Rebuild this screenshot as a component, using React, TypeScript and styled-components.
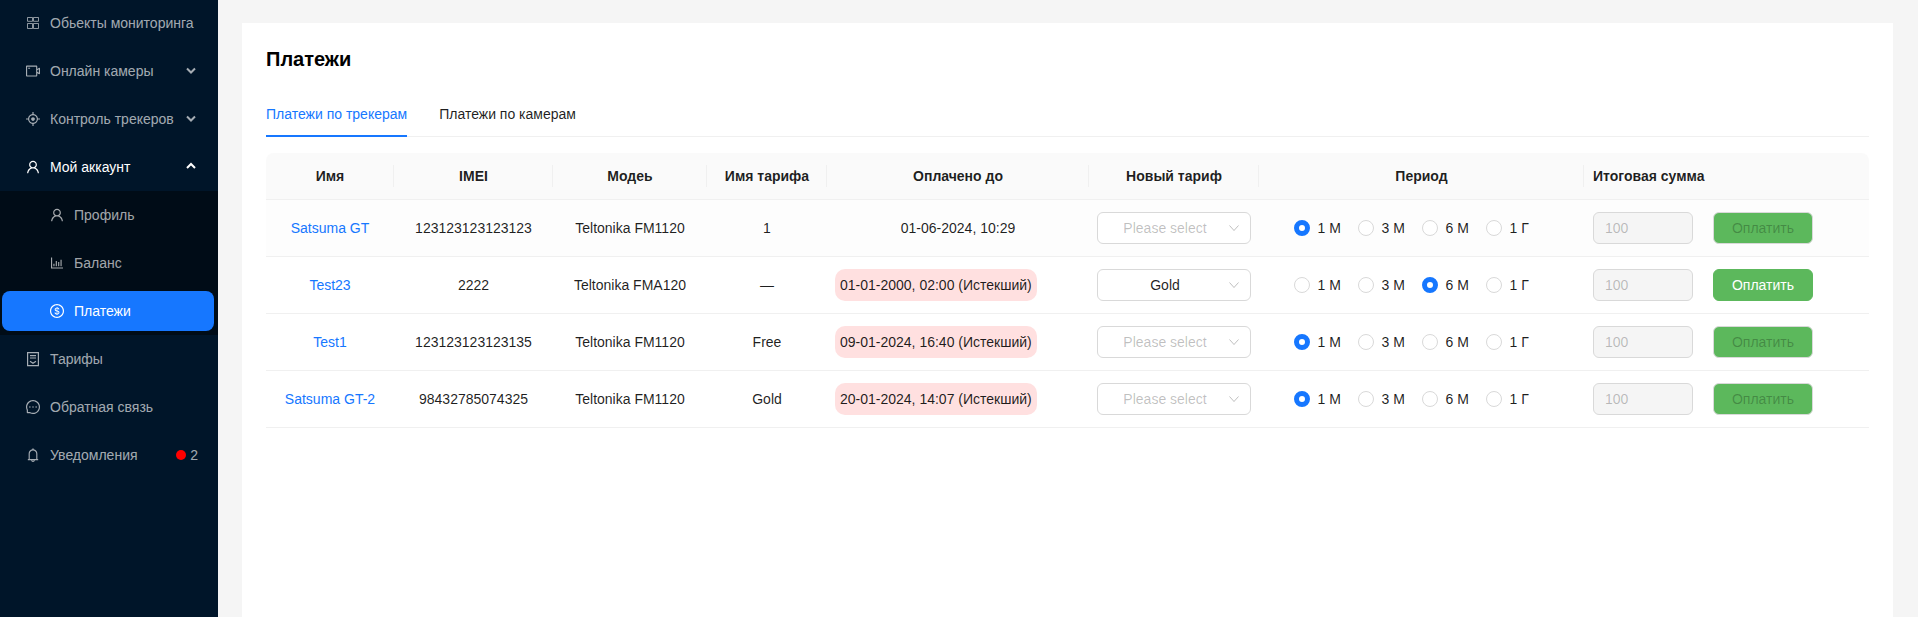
import { createGlobalStyle, styled } from "styled-components";
import {
  AiOutlineAim,
  AiOutlineBarChart,
  AiOutlineBell,
  AiOutlineDollar,
  AiOutlineMessage,
  AiOutlineUser,
  AiOutlineVideoCamera,
} from "react-icons/ai";

const GlobalStyle = createGlobalStyle`
  html, body {
    margin: 0;
    height: 617px;
    overflow: hidden;
    background: #f5f5f5;
    font-family: "Liberation Sans", Arial, sans-serif;
    font-size: 14px;
    color: rgba(0, 0, 0, 0.88);
  }
  * { box-sizing: border-box; }
`;

const Layout = styled.div`
  display: flex;
  height: 617px;
`;

const Sider = styled.nav`
  width: 218px;
  flex: none;
  background: #001529;
  padding-top: 3px;
  color: rgba(255, 255, 255, 0.65);
`;

const MenuItem = styled.div<{ $open?: boolean; $active?: boolean; $sub?: boolean }>`
  height: 40px;
  margin: 0 4px 8px 2px;
  padding-left: ${(p) => (p.$sub ? "47px" : "23px")};
  padding-right: 18px;
  display: flex;
  align-items: center;
  gap: 9px;
  border-radius: 8px;
  color: ${(p) => (p.$open || p.$active ? "#fff" : "rgba(255, 255, 255, 0.65)")};
  background: ${(p) => (p.$active ? "#1677ff" : "transparent")};
  svg.menu-icon { width: 16px; height: 16px; flex: none; }
  &:last-child { margin-bottom: 0; }
`;

const SubMenu = styled.div`
  background: #000c17;
  padding: 4px 0;
  margin-bottom: 4px;
  margin-top: -4px;
`;

const Label = styled.span`
  flex: 1;
  white-space: nowrap;
`;

const Arrow = styled.svg`
  width: 10px;
  height: 10px;
  flex: none;
  fill: none;
  stroke: currentColor;
  stroke-width: 2;
  margin-top: -2px;
`;

const Count = styled.span`
  display: flex;
  align-items: center;
  gap: 4px;
  margin-right: -2px;
  &::before {
    content: "";
    width: 10px;
    height: 10px;
    border-radius: 50%;
    background: #ff0000;
  }
`;

const Content = styled.main`
  flex: 1;
  padding: 23px 25px 0 24px;
  min-width: 0;
`;

const Card = styled.section`
  background: #fff;
  height: 100%;
  padding: 24px;
`;

const Title = styled.h1`
  margin: 0;
  font-size: 20px;
  line-height: 24px;
  font-weight: 700;
  color: #000;
`;

const Tabs = styled.div`
  display: flex;
  gap: 32px;
  margin-top: 20px;
  border-bottom: 1px solid #f0f0f0;
  height: 46px;
`;

const Tab = styled.div<{ $active?: boolean }>`
  height: 46px;
  line-height: 46px;
  color: ${(p) => (p.$active ? "#1677ff" : "rgba(0, 0, 0, 0.88)")};
  border-bottom: 2px solid ${(p) => (p.$active ? "#1677ff" : "transparent")};
`;

const Table = styled.table`
  width: 1603px;
  margin-top: 16px;
  table-layout: fixed;
  border-collapse: separate;
  border-spacing: 0;
  text-align: center;
`;

const Head = styled.th<{ $left?: boolean }>`
  position: relative;
  height: 47px;
  padding: 12px 8px;
  padding-left: ${(p) => (p.$left ? "9px" : "8px")};
  background: #fafafa;
  border-bottom: 1px solid #f0f0f0;
  font-weight: 700;
  text-align: ${(p) => (p.$left ? "left" : "center")};
  &:first-child { border-top-left-radius: 8px; }
  &:last-child { border-top-right-radius: 8px; }
  &:not(:last-child)::after {
    content: "";
    position: absolute;
    right: 0;
    top: 12px;
    height: 22px;
    width: 1px;
    background: #f0f0f0;
  }
`;

const Cell = styled.td<{ $left?: boolean; $tinted?: boolean }>`
  height: 57px;
  padding: 12px 8px;
  padding-left: ${(p) => (p.$left ? "9px" : "8px")};
  border-bottom: 1px solid #f0f0f0;
  background: ${(p) => (p.$tinted ? "#fdfdfd" : "#fff")};
  text-align: ${(p) => (p.$left ? "left" : "center")};
`;

const NameLink = styled.a`
  color: #1677ff;
`;

const Expired = styled.span`
  display: block;
  width: fit-content;
  height: 32px;
  line-height: 32px;
  padding: 0 5px;
  border-radius: 10px;
  background: #ffe0e0;
  white-space: nowrap;
`;

const SelectBox = styled.div<{ $empty?: boolean }>`
  position: relative;
  height: 32px;
  line-height: 30px;
  border: 1px solid #d9d9d9;
  border-radius: 6px;
  background: #fff;
  padding-right: 18px;
  color: ${(p) => (p.$empty ? "rgba(0, 0, 0, 0.25)" : "rgba(0, 0, 0, 0.88)")};
`;

const SelectArrow = styled.svg`
  position: absolute;
  right: 11px;
  top: 10px;
  width: 10px;
  height: 10px;
  fill: none;
  stroke: rgba(0, 0, 0, 0.25);
  stroke-width: 1;
`;

const RadioGroup = styled.div`
  display: flex;
  justify-content: center;
  white-space: nowrap;
`;

const RadioOption = styled.label`
  display: flex;
  align-items: center;
  width: 64px;
  text-align: left;
`;

const RadioDot = styled.span<{ $checked?: boolean }>`
  width: 16px;
  height: 16px;
  flex: none;
  margin-right: 8px;
  border-radius: 50%;
  background: #fff;
  border: ${(p) => (p.$checked ? "5px solid #1677ff" : "1px solid #d9d9d9")};
`;

const PayRow = styled.div`
  display: flex;
  gap: 20px;
`;

const AmountInput = styled.div`
  width: 100px;
  height: 32px;
  line-height: 30px;
  padding-left: 11px;
  text-align: left;
  border: 1px solid #d9d9d9;
  border-radius: 6px;
  background: #f5f5f5;
  color: rgba(0, 0, 0, 0.25);
`;

const PayButton = styled.button<{ $disabled?: boolean }>`
  width: 100px;
  height: 32px;
  padding: 0;
  font: inherit;
  border-radius: 6px;
  background: #5cb85c;
  border: 1px solid ${(p) => (p.$disabled ? "#d9d9d9" : "#5cb85c")};
  color: ${(p) => (p.$disabled ? "rgba(0, 0, 0, 0.25)" : "#fff")};
`;

const columns = [128, 159, 154, 120, 262, 170, 325, 285];
const periods = ["1 М", "3 М", "6 М", "1 Г"];

const rows = [
  { name: "Satsuma GT", imei: "123123123123123", model: "Teltonika FM1120", plan: "1", paid: "01-06-2024, 10:29", expired: false, tariff: "", period: 0 },
  { name: "Test23", imei: "2222", model: "Teltonika FMA120", plan: "—", paid: "01-01-2000, 02:00 (Истекший)", expired: true, tariff: "Gold", period: 2 },
  { name: "Test1", imei: "123123123123135", model: "Teltonika FM1120", plan: "Free", paid: "09-01-2024, 16:40 (Истекший)", expired: true, tariff: "", period: 0 },
  { name: "Satsuma GT-2", imei: "98432785074325", model: "Teltonika FM1120", plan: "Gold", paid: "20-01-2024, 14:07 (Истекший)", expired: true, tariff: "", period: 0 },
];

function Chevron({ up }: { up?: boolean }) {
  return (
    <Arrow viewBox="0 0 10 10">
      <path d={up ? "M1 7l4-4 4 4" : "M1 3.5l4 4 4-4"} />
    </Arrow>
  );
}

function ObjectsIcon() {
  return (
    <svg className="menu-icon" viewBox="0 0 16 16" fill="none" stroke="currentColor" strokeWidth="1" opacity="0.85">
      <path d="M2.5 2.5h5v3.8h-5zM8.5 2.5h5v3.8h-5zM2.5 8.5h5v5h-5zM8.5 8.5h5v5h-5z" />
    </svg>
  );
}

function TariffIcon() {
  return (
    <svg className="menu-icon" viewBox="0 0 16 16" fill="none" stroke="currentColor" strokeWidth="1.2">
      <path d="M2.6 1.6h10.8v13H2.6zM5 4.6h6M5 7h6M5 10.2l3 2 3-2" />
    </svg>
  );
}

function App() {
  return (
    <Layout>
      <GlobalStyle />
      <Sider>
        <MenuItem>
          <ObjectsIcon />
          <Label>Обьекты мониторинга</Label>
        </MenuItem>
        <MenuItem>
          <AiOutlineVideoCamera className="menu-icon" />
          <Label>Онлайн камеры</Label>
          <Chevron />
        </MenuItem>
        <MenuItem>
          <AiOutlineAim className="menu-icon" />
          <Label>Контроль трекеров</Label>
          <Chevron />
        </MenuItem>
        <MenuItem $open>
          <AiOutlineUser className="menu-icon" />
          <Label>Мой аккаунт</Label>
          <Chevron up />
        </MenuItem>
        <SubMenu>
          <MenuItem $sub>
            <AiOutlineUser className="menu-icon" />
            <Label>Профиль</Label>
          </MenuItem>
          <MenuItem $sub>
            <AiOutlineBarChart className="menu-icon" />
            <Label>Баланс</Label>
          </MenuItem>
          <MenuItem $sub $active>
            <AiOutlineDollar className="menu-icon" />
            <Label>Платежи</Label>
          </MenuItem>
        </SubMenu>
        <MenuItem>
          <TariffIcon />
          <Label>Тарифы</Label>
        </MenuItem>
        <MenuItem>
          <AiOutlineMessage className="menu-icon" />
          <Label>Обратная связь</Label>
        </MenuItem>
        <MenuItem>
          <AiOutlineBell className="menu-icon" />
          <Label>Уведомления</Label>
          <Count>2</Count>
        </MenuItem>
      </Sider>
      <Content>
        <Card>
          <Title>Платежи</Title>
          <Tabs>
            <Tab $active>Платежи по трекерам</Tab>
            <Tab>Платежи по камерам</Tab>
          </Tabs>
          <Table>
            <colgroup>
              {columns.map((w, i) => (
                <col key={i} width={w} />
              ))}
            </colgroup>
            <thead>
              <tr>
                <Head>Имя</Head>
                <Head>IMEI</Head>
                <Head>Модеь</Head>
                <Head>Имя тарифа</Head>
                <Head>Оплачено до</Head>
                <Head>Новый тариф</Head>
                <Head>Период</Head>
                <Head $left>Итоговая сумма</Head>
              </tr>
            </thead>
            <tbody>
              {rows.map((row, i) => (
                <tr key={row.name}>
                  <Cell $tinted={i === 0}><NameLink>{row.name}</NameLink></Cell>
                  <Cell $tinted={i === 0}>{row.imei}</Cell>
                  <Cell $tinted={i === 0}>{row.model}</Cell>
                  <Cell $tinted={i === 0}>{row.plan}</Cell>
                  <Cell $tinted={i === 0}>
                    {row.expired ? <Expired>{row.paid}</Expired> : row.paid}
                  </Cell>
                  <Cell $tinted={i === 0}>
                    <SelectBox $empty={!row.tariff}>
                      {row.tariff || "Please select"}
                      <SelectArrow viewBox="0 0 10 10">
                        <path d="M0.5 2.5L5 7.5l4.5-5" />
                      </SelectArrow>
                    </SelectBox>
                  </Cell>
                  <Cell $tinted={i === 0}>
                    <RadioGroup>
                      {periods.map((p, j) => (
                        <RadioOption key={p}>
                          <RadioDot $checked={j === row.period} />
                          {p}
                        </RadioOption>
                      ))}
                    </RadioGroup>
                  </Cell>
                  <Cell $tinted={i === 0} $left>
                    <PayRow>
                      <AmountInput>100</AmountInput>
                      <PayButton $disabled={!row.tariff}>Оплатить</PayButton>
                    </PayRow>
                  </Cell>
                </tr>
              ))}
            </tbody>
          </Table>
        </Card>
      </Content>
    </Layout>
  );
}

export default App;
